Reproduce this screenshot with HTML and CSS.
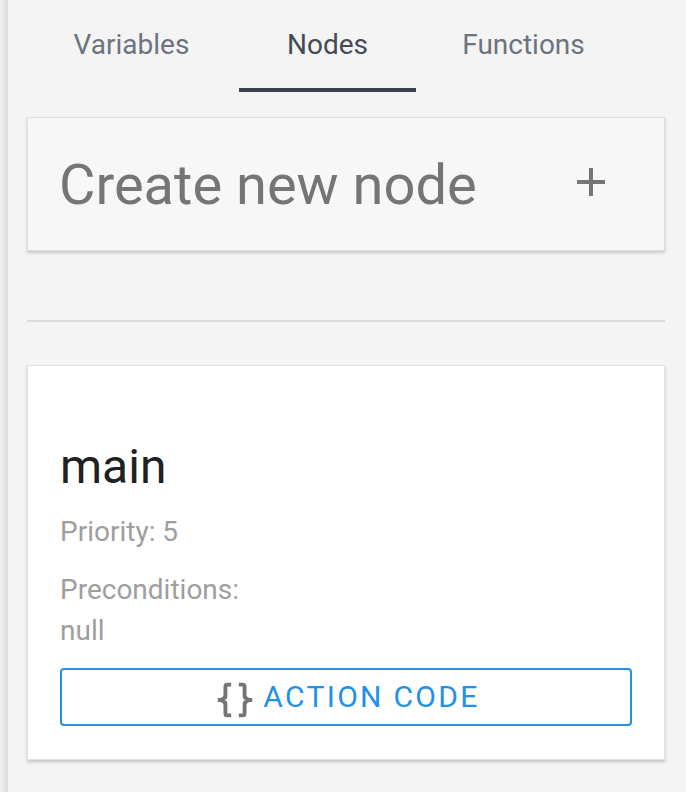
FILE: index.html
```html
<!DOCTYPE html>
<html lang="en">
<head>
<meta charset="utf-8">
<title>Nodes</title>
<link rel="stylesheet" href="styles.css">
</head>
<body>
<div class="edge"></div>
<main class="panel">
  <nav class="tabs">
    <div class="tab">Variables</div>
    <div class="tab active">Nodes</div>
    <div class="tab">Functions</div>
  </nav>
  <div class="create-card">
    <span class="create-label">Create new node</span>
    <svg class="plus" width="28" height="28" viewBox="0 0 28 28"><path d="M14 0V28M0 14H28" stroke="#757575" stroke-width="4" fill="none"/></svg>
  </div>
  <hr class="divider">
  <section class="node-card">
    <h2 class="node-name">main</h2>
    <div class="node-meta priority">Priority: 5</div>
    <div class="node-meta precond">Preconditions:<br>null</div>
    <button class="action-btn" type="button">
      <svg class="braces" width="46" height="46" viewBox="0 0 24 24"><path fill="#757575" d="M8,3A2,2 0 0,0 6,5V9A2,2 0 0,1 4,11H3V13H4A2,2 0 0,1 6,15V19A2,2 0 0,0 8,21H10V19H8V14A2,2 0 0,0 6,12A2,2 0 0,0 8,10V5H10V3M16,3A2,2 0 0,1 18,5V9A2,2 0 0,0 20,11H21V13H20A2,2 0 0,0 18,15V19A2,2 0 0,1 16,21H14V19H16V14A2,2 0 0,1 18,12A2,2 0 0,1 16,10V5H14V3H16Z"/></svg>
      <span class="btn-label">ACTION CODE</span>
    </button>
  </section>
</main>
</body>
</html>
```

FILE: styles.css
```css
html, body {
  margin: 0;
  padding: 0;
}
body {
  display: flex;
  min-height: 100vh;
  background: #f4f4f4;
  font-family: Roboto, "Liberation Sans", sans-serif;
}
.edge {
  width: 8px;
  flex: none;
  background: linear-gradient(to right, #f0f0f0, #dcdcdc);
}
.panel {
  flex: 1;
  padding: 0 21px 0 19px;
}
.tabs {
  display: flex;
  padding-left: 16px;
}
.tab {
  width: 177px;
  margin-right: 19px;
  padding: 29px 0 27px;
  font-size: 28px;
  line-height: 32px;
  text-align: center;
  color: #6d737e;
  border-bottom: 4px solid transparent;
}
.tab.active {
  color: #454a55;
  border-bottom-color: #3d4251;
}
.create-card {
  margin-top: 25px;
  display: flex;
  justify-content: space-between;
  align-items: flex-start;
  padding: 39px 59px 37px 31px;
  background: #f7f7f7;
  border: 1px solid #dedede;
  box-shadow: 0 2px 3px rgba(0, 0, 0, 0.18);
}
.create-label {
  font-size: 56px;
  line-height: 56px;
  color: #757575;
}
.plus {
  margin-top: 11px;
}
.divider {
  margin: 69px 0 0;
  height: 2px;
  border: 0;
  background: #dcdcdc;
}
.node-card {
  margin-top: 43px;
  padding: 73px 32px 33px;
  background: #ffffff;
  border: 1px solid #e2e2e2;
  box-shadow: 0 2px 3px rgba(0, 0, 0, 0.2);
}
.node-name {
  margin: 0;
  font-size: 48px;
  line-height: 56px;
  font-weight: 400;
  color: #212121;
}
.node-meta {
  font-size: 28px;
  color: #9e9e9e;
}
.priority {
  margin-top: 21px;
  line-height: 32px;
}
.precond {
  margin-top: 21px;
  line-height: 41px;
}
.action-btn {
  margin-top: 17px;
  width: 100%;
  height: 58px;
  box-sizing: border-box;
  display: flex;
  align-items: center;
  justify-content: center;
  gap: 5px;
  padding: 0;
  background: #ffffff;
  border: 2px solid #2190e8;
  border-radius: 4px;
  font-family: Roboto, "Liberation Sans", sans-serif;
}
.braces {
  margin-top: 5px;
  flex: none;
}
.btn-label {
  font-size: 30px;
  line-height: 32px;
  letter-spacing: 2.3px;
  color: #2190e8;
}
```
